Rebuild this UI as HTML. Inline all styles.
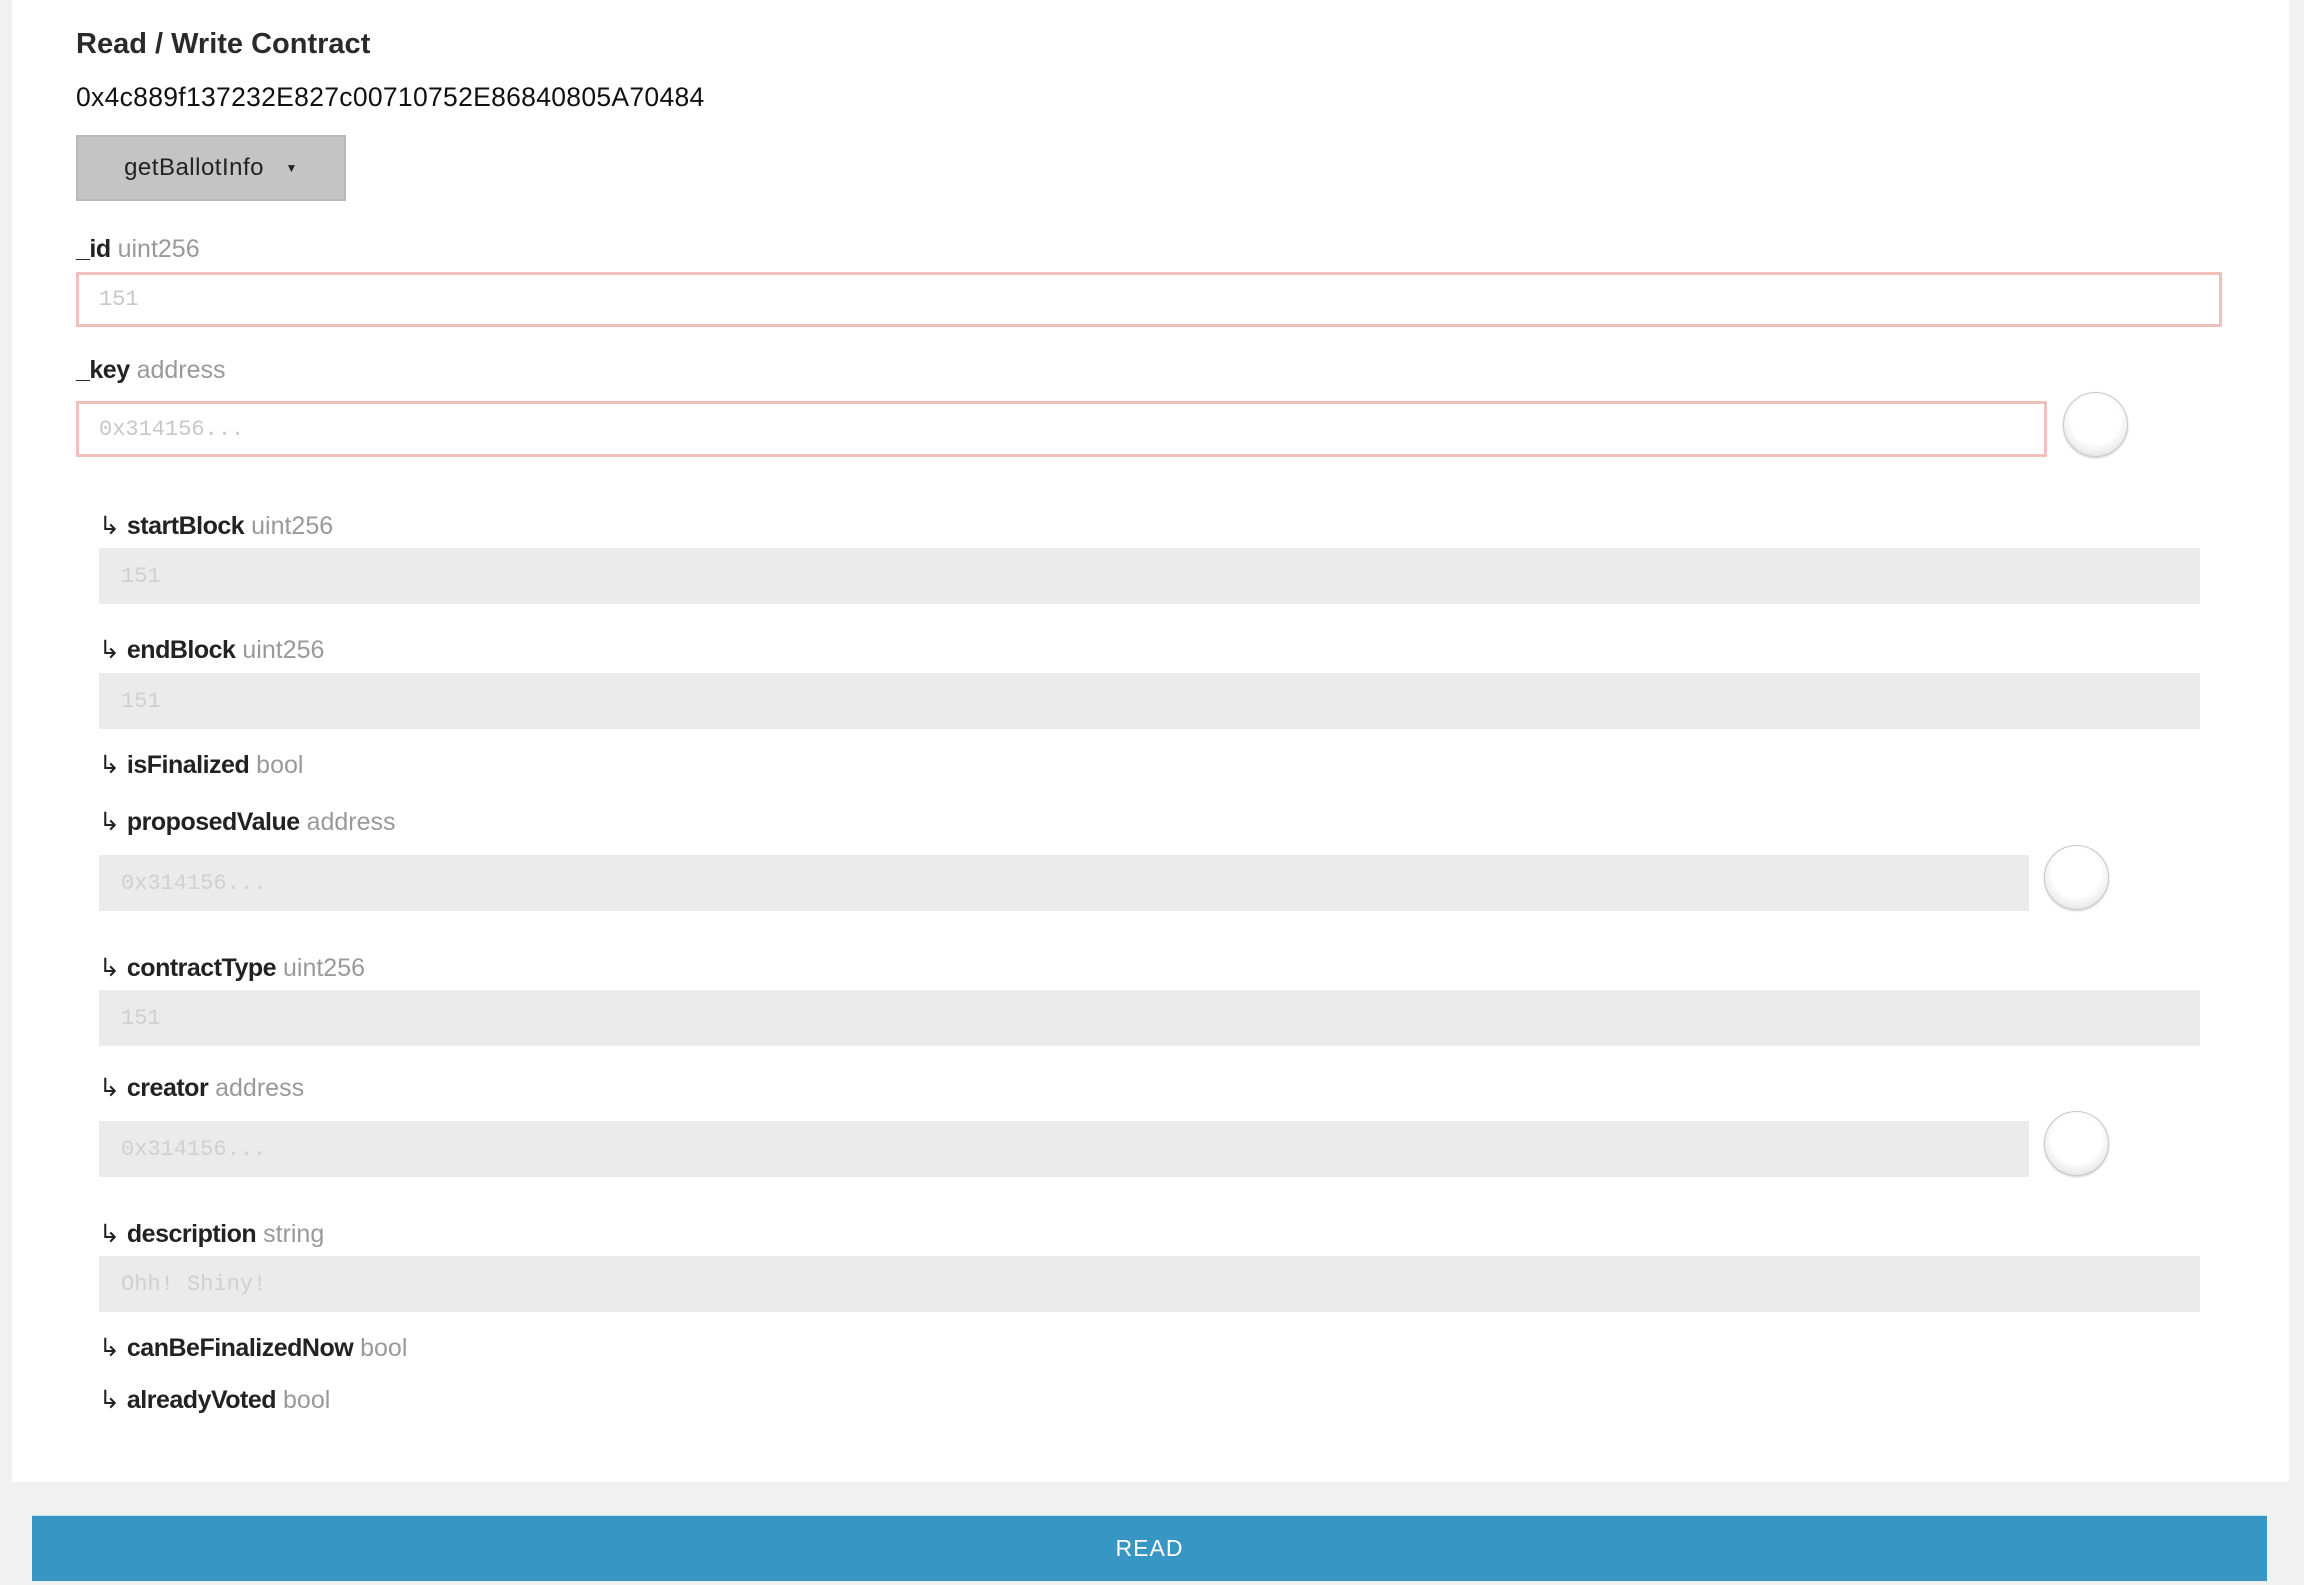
<!DOCTYPE html>
<html><head><meta charset="utf-8"><style>
*{margin:0;padding:0;box-sizing:border-box}
html,body{width:2304px;height:1585px;overflow:hidden;background:#f1f1f1;font-family:"Liberation Sans",sans-serif}
.card{position:absolute;left:12px;top:0;width:2277px;height:1482px;background:#fff}
.a{position:absolute;white-space:nowrap}
.lbl{font-size:25px;color:#222;line-height:30px}
.lbl b{font-weight:bold;letter-spacing:-0.5px}
.lbl span{color:#999;font-weight:normal}
.in{position:absolute;border:3px solid #f2c0bb;background:#fff;font-family:"Liberation Mono",monospace;font-size:22px;color:#c8c8c8;padding-left:20px;display:flex;align-items:center}
.out{position:absolute;background:#ebebeb;font-family:"Liberation Mono",monospace;font-size:22px;color:#cfcfcf;padding-left:22px;display:flex;align-items:center}
.c{position:absolute;width:65px;height:65px;border-radius:50%;border:1px solid #c8c8c8;background:radial-gradient(circle at 50% 42%,#fff 50%,#ececec 72%,#c4c4c4 92%,#aaa 100%);box-shadow:0 1px 2px rgba(0,0,0,.2)}
</style></head><body>
<div class="card"></div>
<div class="a" style="left:76px;top:28px;font-size:29px;font-weight:bold;color:#2a2a2a">Read / Write Contract</div>
<div class="a" style="left:76px;top:82px;font-size:26.5px;color:#111;letter-spacing:0.3px">0x4c889f137232E827c00710752E86840805A70484</div>
<div class="a" style="left:76px;top:135px;width:270px;height:66px;background:#c4c4c4;border:2px solid #b9b9b9;font-size:24px;color:#222;display:flex;align-items:center;justify-content:center;letter-spacing:0.5px">getBallotInfo&nbsp;&nbsp;&nbsp;<span style="font-size:12px">▼</span></div>

<div class="a lbl" style="left:76px;top:234px"><b>_id</b> <span>uint256</span></div>
<div class="in" style="left:76px;top:272px;width:2146px;height:55px">151</div>
<div class="a lbl" style="left:76px;top:355px"><b>_key</b> <span>address</span></div>
<div class="in" style="left:76px;top:401px;width:1971px;height:56px">0x314156...</div>
<div class="c" style="left:2063px;top:392px"></div>

<div class="a lbl" style="left:99px;top:511px">↳ <b>startBlock</b> <span>uint256</span></div>
<div class="out" style="left:99px;top:548px;width:2101px;height:56px">151</div>
<div class="a lbl" style="left:99px;top:635px">↳ <b>endBlock</b> <span>uint256</span></div>
<div class="out" style="left:99px;top:673px;width:2101px;height:56px">151</div>
<div class="a lbl" style="left:99px;top:750px">↳ <b>isFinalized</b> <span>bool</span></div>
<div class="a lbl" style="left:99px;top:807px">↳ <b>proposedValue</b> <span>address</span></div>
<div class="out" style="left:99px;top:855px;width:1930px;height:56px">0x314156...</div>
<div class="c" style="left:2044px;top:845px"></div>
<div class="a lbl" style="left:99px;top:953px">↳ <b>contractType</b> <span>uint256</span></div>
<div class="out" style="left:99px;top:990px;width:2101px;height:56px">151</div>
<div class="a lbl" style="left:99px;top:1073px">↳ <b>creator</b> <span>address</span></div>
<div class="out" style="left:99px;top:1121px;width:1930px;height:56px">0x314156...</div>
<div class="c" style="left:2044px;top:1111px"></div>
<div class="a lbl" style="left:99px;top:1219px">↳ <b>description</b> <span>string</span></div>
<div class="out" style="left:99px;top:1256px;width:2101px;height:56px">Ohh! Shiny!</div>
<div class="a lbl" style="left:99px;top:1333px">↳ <b>canBeFinalizedNow</b> <span>bool</span></div>
<div class="a lbl" style="left:99px;top:1385px">↳ <b>alreadyVoted</b> <span>bool</span></div>

<div class="a" style="left:32px;top:1515px;width:2235px;height:66px;background:#3796c3;border-top:1px solid #bfe3f3;color:#fff;font-size:23px;display:flex;align-items:center;justify-content:center;letter-spacing:1px">READ</div>
</body></html>
